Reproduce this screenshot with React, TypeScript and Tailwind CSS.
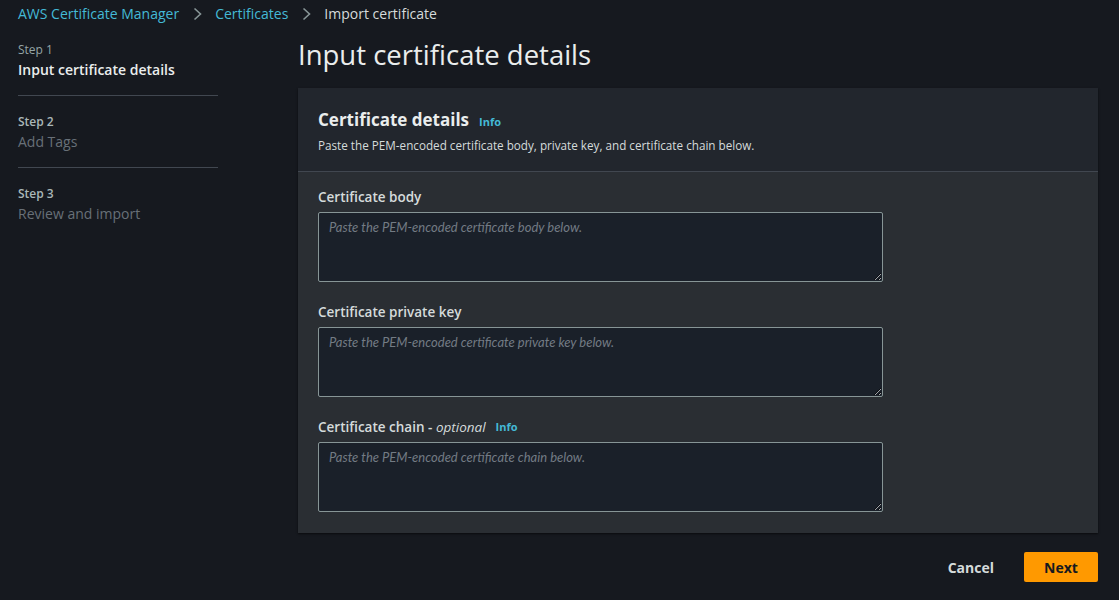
import { ReactNode } from 'react';

const font = { fontFamily: '"Open Sans", "Noto Sans", sans-serif' };

function Chevron() {
  return (
    <svg width="16" height="16" viewBox="0 0 16 16" className="mx-[10px] text-[#879596]">
      <path d="M5.5 2.5l6 5.5-6 5.5" fill="none" stroke="currentColor" strokeWidth="1.6" />
    </svg>
  );
}

function Field({ label, placeholder }: { label: ReactNode; placeholder: string }) {
  return (
    <div className="flex flex-col">
      <label className="text-[13.5px] leading-[20px] font-semibold text-[#d5dbdb] mb-[5px] flex items-center">{label}</label>
      <textarea
        placeholder={placeholder}
        className="w-[565px] h-[70px] bg-[#1a2029] border border-[#879596] rounded-[2px] px-[10px] py-[4px] text-[13px] leading-[20px] text-[#d5dbdb] placeholder:text-[#737b84] placeholder:italic outline-none"
        style={{ fontFamily: 'Lato, "Open Sans", sans-serif' }}
      />
    </div>
  );
}

function Step({ n, title, active }: { n: number; title: string; active?: boolean }) {
  return (
    <div className="py-[1px]">
      <div className={`text-[12px] leading-[16px] ${active ? 'text-[#95a5a6]' : 'text-[#aab7b8] font-semibold'}`}>Step {n}</div>
      <div className={`text-[14px] leading-[22px] mt-[1px] ${active ? 'font-semibold text-[#eaeded]' : 'text-[#687078]'}`}>{title}</div>
    </div>
  );
}

export default function App() {
  return (
    <div className="min-h-screen w-full bg-[#16191f] text-[#d5dbdb] overflow-hidden" style={font}>
      <nav className="flex items-center h-[28px] px-[18px] text-[14px] leading-[20px]">
        <span className="text-[#44b9d6]">AWS Certificate Manager</span>
        <Chevron />
        <span className="text-[#44b9d6]">Certificates</span>
        <Chevron />
        <span className="text-[#d5dbdb]">Import certificate</span>
      </nav>

      <div className="flex px-[18px] pt-[13px]">
        <aside className="w-[200px] flex flex-col">
          <Step n={1} title="Input certificate details" active />
          <div className="border-t border-[#414750] mt-[13px] mb-[17px]" />
          <Step n={2} title="Add Tags" />
          <div className="border-t border-[#414750] mt-[13px] mb-[17px]" />
          <Step n={3} title="Review and import" />
        </aside>

        <main className="ml-[80px] w-[800px]">
          <h1 className="text-[27.5px] leading-[34px] text-[#eaeded] -mt-[3px]">Input certificate details</h1>

          <section className="mt-[16px] bg-[#2a2e33] shadow-[0_1px_2px_rgba(0,0,0,0.6)]">
            <div className="bg-[#22262d] border-b border-[#414750] px-[20px] pt-[19px] pb-[17px]">
              <div className="flex items-baseline">
                <h2 className="text-[17px] leading-[26px] font-bold text-[#eaeded]">Certificate details</h2>
                <span className="ml-[10px] text-[11px] font-bold text-[#44b9d6]">Info</span>
              </div>
              <p className="text-[11.7px] leading-[18px] text-[#d5dbdb] mt-[3px]">
                Paste the PEM-encoded certificate body, private key, and certificate chain below.
              </p>
            </div>
            <div className="px-[20px] pt-[15px] pb-[21px] flex flex-col gap-[20px]">
              <Field label="Certificate body" placeholder="Paste the PEM-encoded certificate body below." />
              <Field label="Certificate private key" placeholder="Paste the PEM-encoded certificate private key below." />
              <Field
                label={
                  <>
                    Certificate chain -&nbsp;<i className="font-normal">optional</i>
                    <span className="ml-[10px] text-[11px] font-bold text-[#44b9d6]">Info</span>
                  </>
                }
                placeholder="Paste the PEM-encoded certificate chain below."
              />
            </div>
          </section>

          <div className="flex justify-end items-center mt-[19px] gap-[30px]">
            <button className="text-[14px] font-bold text-[#d5dbdb]">Cancel</button>
            <button className="w-[74px] h-[30px] bg-[#ff9900] rounded-[2px] text-[14px] font-bold text-[#16191f]">Next</button>
          </div>
        </main>
      </div>
    </div>
  );
}
